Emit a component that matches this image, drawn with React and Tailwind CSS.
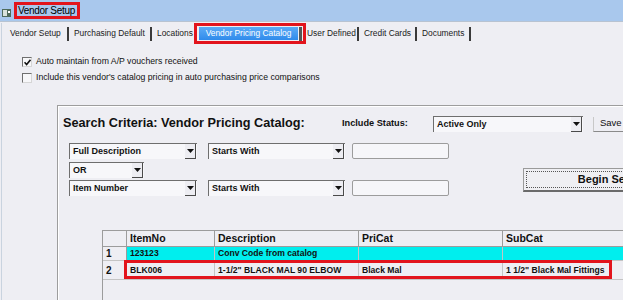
import React from "react";

function Sep() {
  return <div className="h-[14px] w-[2px] shrink-0 bg-[#3a3a3a]" />;
}

function Arrow() {
  return (
    <svg width="7" height="4" viewBox="0 0 7 4">
      <polygon points="0,0 7,0 3.5,4" fill="#111" />
    </svg>
  );
}

function Select({ value, width }) {
  return (
    <div className={`flex h-[16px] shrink-0 items-stretch border-l border-t border-[#6e6e6e] bg-[#f7f7fa] ${width}`}>
      <div className="flex-1 whitespace-nowrap pl-[3px] text-[9px] font-bold leading-[15px] text-[#111]">
        {value}
      </div>
      <div className="mr-[1px] flex w-[11px] items-center justify-center border-b border-r border-[#4a4a4a] bg-[#ededf2]">
        <Arrow />
      </div>
    </div>
  );
}

function TextBox() {
  return <div className="h-[16px] w-[97px] shrink-0 rounded-[2px] border border-[#9c9c9c] bg-[#f6f6f9]" />;
}

function Checkbox({ checked }) {
  return (
    <div className="flex h-[10px] w-[10px] shrink-0 items-center justify-center border-l border-t border-[#6f6f6f] border-b border-r border-b-[#d6d6d6] border-r-[#d6d6d6] bg-[#f7f7f9]">
      {checked && (
        <svg width="7" height="7" viewBox="0 0 7 7">
          <path d="M0.5 3.2 L2.6 5.6 L6.5 0.8" stroke="#111" strokeWidth="1.6" fill="none" />
        </svg>
      )}
    </div>
  );
}

const rows = [
  { n: "1", item: "123123", desc: "Conv Code from catalog", pri: "", sub: "", hi: true },
  { n: "2", item: "BLK006", desc: '1-1/2" BLACK MAL 90 ELBOW', pri: "Black Mal", sub: '1 1/2" Black Mal Fittings', hi: false },
];

export default function App() {
  return (
    <div className="relative h-[300px] w-[623px] overflow-hidden bg-[#eeeef3] font-['Liberation_Sans',Arial,sans-serif] text-[#111]">
      {/* title bar */}
      <div className="flex h-[22px] items-center border-b border-[#b8c3d1] bg-[#a9c8ed]">
        <svg className="ml-[2px] mt-[5px]" width="9" height="8" viewBox="0 0 9 8">
          <rect x="0" y="0" width="9" height="8" fill="#4f6b5c" />
          <rect x="1" y="1" width="4" height="6" fill="#d8e2dc" />
          <rect x="6" y="2" width="2" height="2" fill="#ffffff" />
        </svg>
        <div className="ml-[3px] flex h-[17px] w-[66px] items-center border-[3px] border-[#e2141c] pl-[1px] text-[10px] tracking-[-0.3px] leading-none whitespace-nowrap text-black">
          Vendor Setup
        </div>
      </div>

      <div className="ml-[1px] h-[278px] border-l border-[#c9d3df]">
        {/* tabs */}
        <div className="mt-[1px] flex h-[21px] items-center pl-[8px] text-[8.4px] whitespace-nowrap text-[#1a1a1a]">
          <span className="w-[57px]">Vendor Setup</span>
          <Sep />
          <span className="w-[81px] pl-[5px]">Purchasing Default</span>
          <Sep />
          <span className="w-[42px] pl-[5px]">Locations</span>
          <div className="flex h-full w-[112px] shrink-0 items-center border-[3px] border-[#e2141c] pl-[2px]">
            <div className="flex h-[13px] w-[99px] items-center justify-center bg-gradient-to-b from-[#5aaaf6] to-[#2f8beb] text-white">
              Vendor Pricing Catalog
            </div>
            <div className="ml-[1px] h-[14px] w-[3px] bg-[#555]" />
          </div>
          <span className="w-[51px] pl-[1px]">User Defined</span>
          <Sep />
          <span className="w-[56px] pl-[5px]">Credit Cards</span>
          <Sep />
          <span className="w-[52px] pl-[5px]">Documents</span>
          <Sep />
        </div>

        {/* checkboxes */}
        <div className="mt-[10px] pl-[20px] text-[8.7px] whitespace-nowrap">
          <div className="flex h-[16px] items-center gap-[4px]">
            <Checkbox checked />
            <span>Auto maintain from A/P vouchers received</span>
          </div>
          <div className="flex h-[16px] items-center gap-[4px]">
            <Checkbox />
            <span>Include this vendor's catalog pricing in auto purchasing price comparisons</span>
          </div>
        </div>

        {/* search panel */}
        <div className="ml-[55px] mt-[19px] h-[200px] w-[600px] border-l border-t border-[#9d9d9d] shadow-[inset_1px_1px_0_#ffffff]">
          <div className="mt-[10px] flex h-[16px] items-center whitespace-nowrap">
            <div className="ml-[5px] w-[279px] shrink-0 text-[12.7px] font-bold">Search Criteria: Vendor Pricing Catalog:</div>
            <div className="w-[91px] shrink-0 text-[9.2px] font-bold">Include Status:</div>
            <Select value="Active Only" width="w-[150px]" />
            <div className="ml-[10px] flex h-[15px] w-[40px] shrink-0 items-center border-b border-l border-[#8a8a8a] border-l-[#c8c8c8] pl-[6px] text-[9.5px]">
              Save
            </div>
          </div>

          <div className="ml-[11px] mt-[11px] flex">
            <div className="flex flex-col">
              <div className="flex items-center">
                <Select value="Full Description" width="w-[128px]" />
                <div className="ml-[11px]">
                  <Select value="Starts With" width="w-[137px]" />
                </div>
                <div className="ml-[7px]">
                  <TextBox />
                </div>
              </div>
              <div className="mt-[3px]">
                <Select value="OR" width="w-[75px]" />
              </div>
              <div className="mt-[2px] flex items-center">
                <Select value="Item Number" width="w-[128px]" />
                <div className="ml-[11px]">
                  <Select value="Starts With" width="w-[137px]" />
                </div>
                <div className="ml-[7px]">
                  <TextBox />
                </div>
              </div>
            </div>
            <div className="ml-[74px] mt-[25px] h-[24px] w-[180px] shrink-0 border border-[#9a9a9a] border-b-2 border-b-[#6a6a6a] bg-[#efeff3] p-[2px]">
              <div className="flex h-full items-center justify-center border border-dotted border-[#555] text-[11px] font-bold whitespace-nowrap">
                Begin Search
              </div>
            </div>
          </div>

          {/* grid */}
          <div className="relative ml-[44px] mt-[34px] h-[80px] w-[600px] border-l border-t border-[#9c9c9c]">
            <div className="flex h-[16px] border-b border-[#9c9c9c] text-[10.5px] font-bold leading-[15px]">
              <div className="w-[24px] shrink-0 border-r border-[#9c9c9c]" />
              <div className="w-[88px] shrink-0 border-r border-[#9c9c9c] pl-[3px]">ItemNo</div>
              <div className="w-[144px] shrink-0 border-r border-[#9c9c9c] pl-[3px]">Description</div>
              <div className="w-[144px] shrink-0 border-r border-[#9c9c9c] pl-[3px]">PriCat</div>
              <div className="w-[160px] shrink-0 pl-[3px]">SubCat</div>
            </div>
            {rows.map((r) => (
              <div
                key={r.n}
                className={`flex border-b border-[#c4c4c4] text-[8.6px] font-bold whitespace-nowrap ${r.hi ? "h-[14px]" : "h-[19px]"}`}
              >
                <div className="flex w-[24px] shrink-0 items-center border-r border-[#9c9c9c] pl-[3px] text-[10px]">{r.n}</div>
                <div className={`flex w-[88px] shrink-0 items-center border-r border-[#c4c4c4] pl-[3px] ${r.hi ? "bg-[#00eeee]" : ""}`}>{r.item}</div>
                <div className={`flex w-[144px] shrink-0 items-center border-r border-[#c4c4c4] pl-[3px] ${r.hi ? "bg-[#00eeee]" : ""}`}>{r.desc}</div>
                <div className={`flex w-[144px] shrink-0 items-center border-r border-[#c4c4c4] pl-[3px] ${r.hi ? "bg-[#00eeee]" : ""}`}>{r.pri}</div>
                <div className={`flex w-[160px] shrink-0 items-center pl-[3px] ${r.hi ? "bg-[#00eeee]" : ""}`}>{r.sub}</div>
              </div>
            ))}
            <div className="absolute left-[21px] top-[29px] h-[19px] w-[488px] border-[3px] border-[#e2141c]" />
          </div>
        </div>
      </div>
    </div>
  );
}
